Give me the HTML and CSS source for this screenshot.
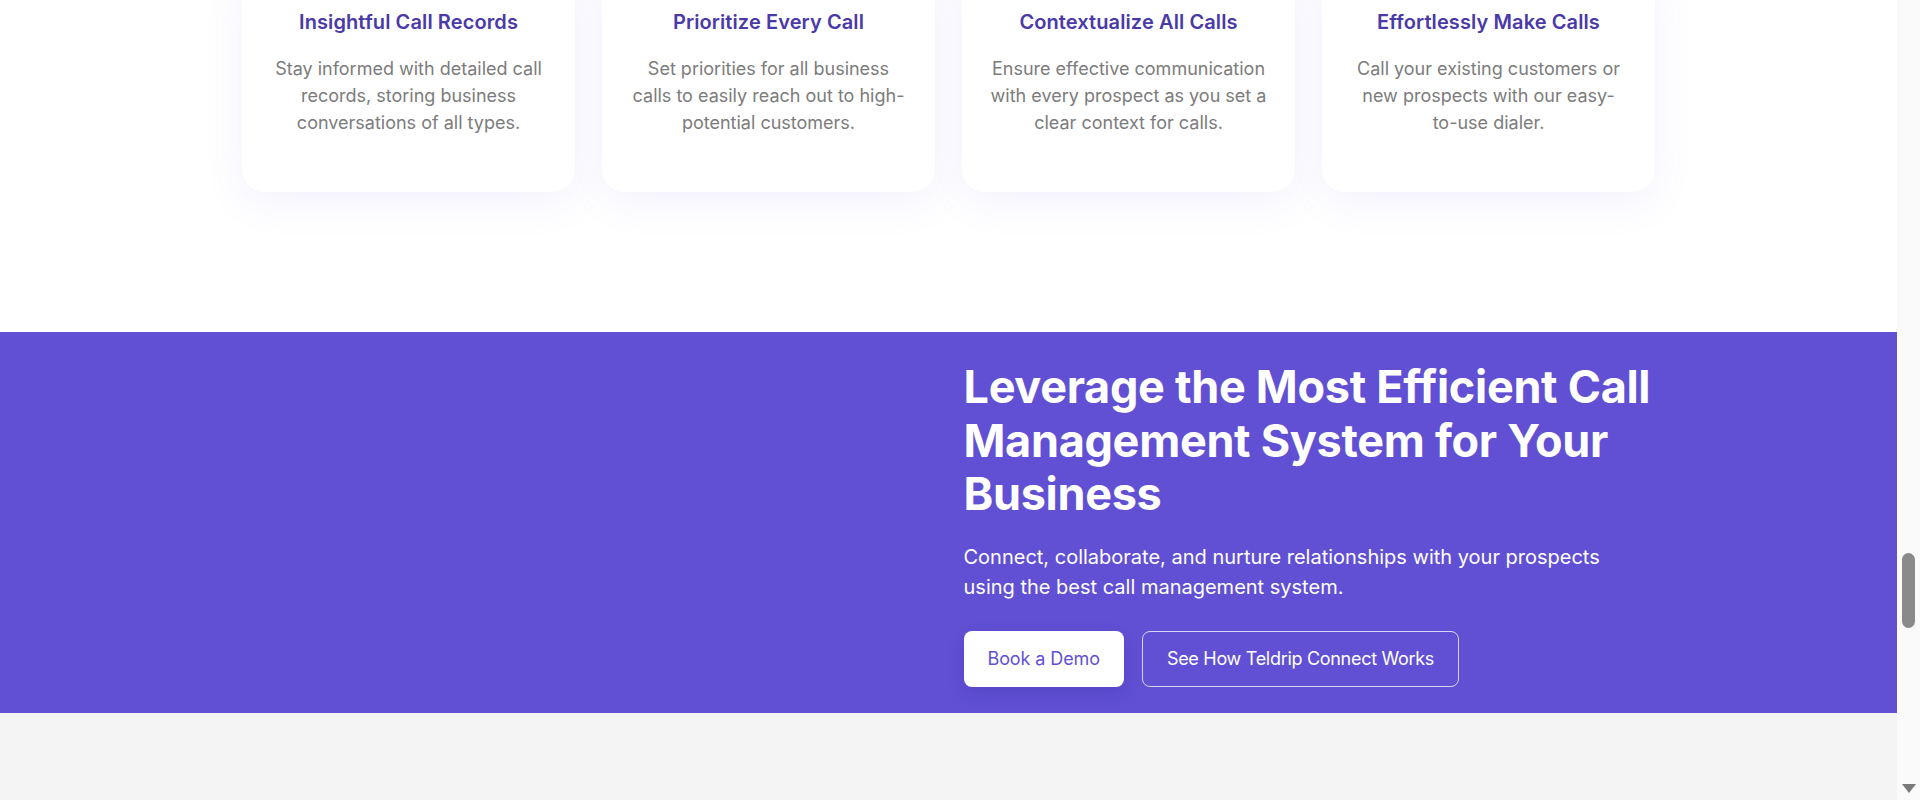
FILE: index.html
```html
<!DOCTYPE html>
<html lang="en">
<head>
<meta charset="utf-8">
<title>Teldrip Connect</title>
<link rel="stylesheet" href="styles.css">
</head>
<body>
<div class="page">
  <section class="features">
    <div class="cards">
      <div class="card">
        <h3 class="card-title">Insightful Call Records</h3>
        <p class="card-text">Stay informed with detailed call<br>records, storing business<br>conversations of all types.</p>
      </div>
      <div class="card">
        <h3 class="card-title">Prioritize Every Call</h3>
        <p class="card-text">Set priorities for all business<br>calls to easily reach out to high-<br>potential customers.</p>
      </div>
      <div class="card">
        <h3 class="card-title">Contextualize All Calls</h3>
        <p class="card-text">Ensure effective communication<br>with every prospect as you set a<br>clear context for calls.</p>
      </div>
      <div class="card">
        <h3 class="card-title">Effortlessly Make Calls</h3>
        <p class="card-text">Call your existing customers or<br>new prospects with our easy-<br>to-use dialer.</p>
      </div>
    </div>
  </section>
  <section class="cta">
    <div class="cta-inner">
      <div class="cta-media"></div>
      <div class="cta-content">
        <h2 class="cta-title">Leverage the Most Efficient Call Management System for Your Business</h2>
        <p class="cta-text">Connect, collaborate, and nurture relationships with your prospects using the best call management system.</p>
        <div class="cta-actions">
          <a class="btn btn-solid" href="#">Book a Demo</a>
          <a class="btn btn-outline" href="#">See How Teldrip Connect Works</a>
        </div>
      </div>
    </div>
  </section>
  <section class="footer-band"></section>
</div>
<div class="scrollbar">
  <div class="scroll-thumb"></div>
  <div class="scroll-arrow"></div>
</div>
</body>
</html>
```
FILE: styles.css
```css
* { box-sizing: border-box; }
html, body { margin: 0; padding: 0; height: 100%; }
body {
  display: flex;
  overflow: hidden;
  background: #ffffff;
  font-family: Inter, "Noto Sans", Arial, sans-serif;
}
.page {
  flex: 1;
  display: flex;
  flex-direction: column;
  min-width: 0;
}
.features {
  height: 332px;
  display: flex;
  justify-content: center;
}
.cards {
  display: flex;
  gap: 27px;
  margin-top: -36px;
  align-self: flex-start;
}
.card {
  width: 333px;
  background: #fff;
  border-radius: 22px;
  box-shadow: 0 10px 40px rgba(98, 80, 212, 0.08);
  padding: 44px 16px 56px;
  text-align: center;
}
.card-title {
  margin: 0;
  font-size: 20px;
  line-height: 28px;
  font-weight: 600;
  color: #4a39a8;
  letter-spacing: 0.1px;
}
.card-text {
  margin: 19px 0 0;
  font-size: 18px;
  line-height: 27px;
  color: #7c7c7c;
}
.cta {
  background: #6150d4;
  height: 381px;
}
.cta-inner {
  width: 1440px;
  margin: 0 auto;
  display: grid;
  grid-template-columns: 1fr 1fr;
}
.cta-content {
  padding: 28px 15px 0;
  color: #fff;
}
.cta-title {
  margin: 0;
  font-size: 45px;
  line-height: 53.5px;
  font-weight: 700;
  letter-spacing: -0.3px;
}
.cta-text {
  margin: 21px 0 0;
  font-size: 20px;
  line-height: 30px;
}
.cta-actions {
  display: flex;
  gap: 18px;
  margin-top: 29px;
}
.btn {
  display: inline-flex;
  align-items: center;
  height: 56px;
  padding: 0 24px;
  border-radius: 8px;
  font-size: 18px;
  text-decoration: none;
  letter-spacing: -0.1px;
}
.btn-solid {
  background: #fff;
  color: #6150d4;
  box-shadow: 0 6px 16px rgba(40, 20, 140, 0.18);
}
.btn-outline {
  color: #fff;
  border: 1px solid rgba(255, 255, 255, 0.75);
  letter-spacing: -0.3px;
}
.footer-band {
  flex: 1;
  background: #f4f4f4;
}
.scrollbar {
  width: 23px;
  background: #fafafa;
  display: flex;
  flex-direction: column;
  align-items: center;
  padding-top: 553px;
  padding-bottom: 7px;
}
.scroll-thumb {
  width: 13px;
  height: 75px;
  border-radius: 7px;
  background: #8a8a8a;
}
.scroll-arrow {
  margin-top: auto;
  width: 0;
  height: 0;
  border-left: 7px solid transparent;
  border-right: 7px solid transparent;
  border-top: 9px solid #7a7a7a;
}
```
